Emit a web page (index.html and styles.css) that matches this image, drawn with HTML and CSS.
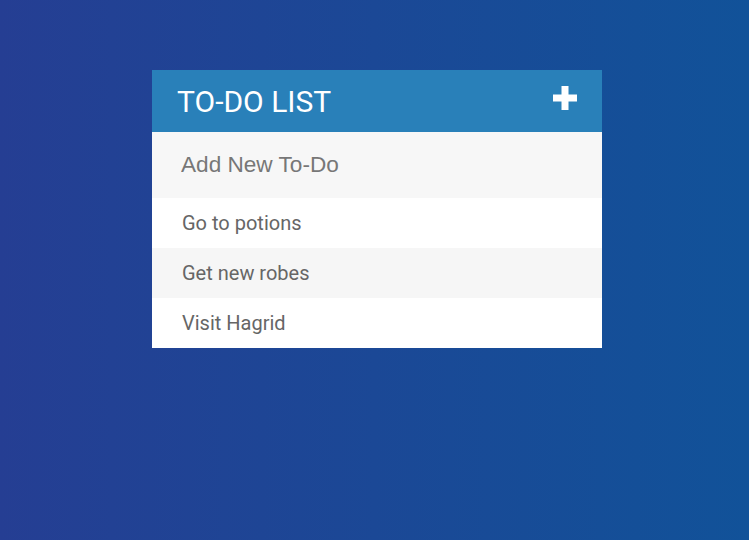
FILE: index.html
```html
<!DOCTYPE html>
<html>
<head>
<meta charset="utf-8">
<link rel="stylesheet" href="styles.css">
</head>
<body>
<div class="card">
  <header class="card-header">
    <h1 class="title">To-Do List</h1>
    <svg class="plus" viewBox="0 0 24 24" width="24" height="24"><path d="M8.5 0h7v8.5H24v7h-8.5V24h-7v-8.5H0v-7h8.5z" fill="#fff"/></svg>
  </header>
  <input class="new-todo" type="text" placeholder="Add New To-Do">
  <ul class="list">
    <li class="item">Go to potions</li>
    <li class="item">Get new robes</li>
    <li class="item">Visit Hagrid</li>
  </ul>
</div>
</body>
</html>
```
FILE: styles.css
```css
html, body { margin: 0; padding: 0; }
body {
  width: 749px;
  height: 540px;
  background: linear-gradient(90deg, #253e93, #115299);
  font-family: Roboto, "Noto Sans", sans-serif;
  padding-top: 70px;
  box-sizing: border-box;
}
.card {
  width: 450px;
  margin-left: 152px;
  background: #fff;
}
.card-header {
  height: 62px;
  background: #2980b9;
  display: flex;
  align-items: center;
  justify-content: space-between;
  padding: 0 25px 0 25px;
}
.title {
  margin: 0;
  font-weight: 400;
  font-size: 30px;
  color: #fff;
  text-transform: uppercase;
}
.plus { display: block; margin-top: -6px; }
.new-todo {
  display: block;
  width: 100%;
  box-sizing: border-box;
  height: 66px;
  border: 0;
  outline: 0;
  background: #f7f7f7;
  padding: 0 0 0 29px;
  font-family: "Liberation Sans", Arial, sans-serif;
  font-size: 22.6px;
  color: #666;
}
.new-todo::placeholder { color: #777; opacity: 1; }
.list { list-style: none; margin: 0; padding: 0; }
.item {
  height: 50px;
  line-height: 50px;
  padding-left: 30px;
  font-size: 20px;
  color: #666;
  background: #fff;
}
.item:nth-child(2) { background: #f6f6f6; }
```
